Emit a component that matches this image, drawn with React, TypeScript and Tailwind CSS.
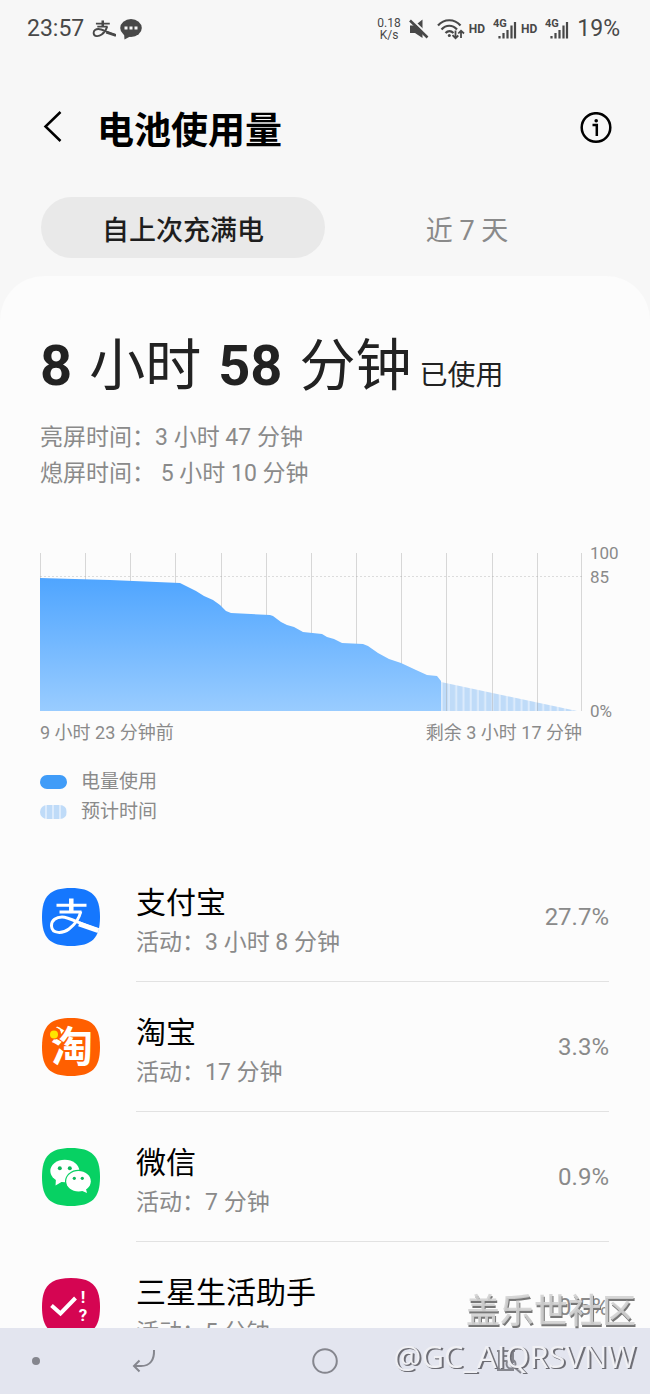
import React from 'react';

interface AppUsage {
  name: string;
  time: string;
  percent: string;
  icon: React.ReactNode;
}

const SQUIRCLE = 'M29 0C50 0 58 8 58 29S50 58 29 58 0 50 0 29 8 0 29 0Z';

// chart size: 542 x 158, one grid line per hour
const GRID_LINES = [0, 45, 90, 135, 181, 226, 271, 316, 361, 406, 452, 497, 541];
const USED_AREA =
  'M0 25L70 27L140 30L156 38L164 43L173 47L180 52L186 58L191 60L230 62L233 63L241 69L247 72L254 74L263 79L282 81L287 84L294 86L302 90L323 91L328 93L338 100L349 106L361 110L376 117L387 122L397 123L401 128V158H0Z';

const AlipayGlyph = ({ strokeWidth = 3 }: { strokeWidth?: number }) => (
  <g fill="none" stroke="currentColor" strokeWidth={strokeWidth}>
    <path d="M14.5 17.3H44.5M17.5 24H39.5" />
    <path d="M29.3 10.5V24" strokeWidth={strokeWidth + 1.5} />
    <path d="M38.8 23.5C37 31 33 36.500 27 41C21 45.500 10 46.500 9.500 38C9.200 32 14.500 29 20 29C28 29 38 36.500 58 42.300" />
    <path d="M37 35.800L58 43.200" strokeWidth={strokeWidth + 2} />
  </g>
);

const AlipayIcon = () => (
  <svg viewBox="0 0 58 58" className="size-[58px] text-white">
    <clipPath id="alipay-clip">
      <path d={SQUIRCLE} />
    </clipPath>
    <path d={SQUIRCLE} fill="#1577fe" />
    <g clipPath="url(#alipay-clip)">
      <AlipayGlyph />
    </g>
  </svg>
);

const TaobaoIcon = () => (
  <svg viewBox="0 0 58 58" className="size-[58px]">
    <path d={SQUIRCLE} fill="#ff5f00" />
    <text
      x="30"
      y="44"
      textAnchor="middle"
      fill="#fff"
      className="font-['Noto_Sans_CJK_SC',sans-serif] text-[42px] font-bold"
    >
      淘
    </text>
    <circle cx="13" cy="15.500" r="6" fill="#ff5f00" />
    <circle cx="12" cy="16.500" r="4" fill="#ffe600" />
  </svg>
);

const WechatIcon = () => (
  <svg viewBox="0 0 58 58" className="size-[58px]">
    <path d={SQUIRCLE} fill="#07d163" />
    <g fill="#fff">
      <path d="M14 30L13.500 37.500L22 32.500Z" />
      <ellipse cx="22.800" cy="23" rx="14.500" ry="11.300" />
      <ellipse cx="36.500" cy="33.300" rx="13.500" ry="11.500" fill="#07d163" />
      <ellipse cx="36.500" cy="33.300" rx="12.300" ry="10.300" />
      <path d="M38 42L45 45L43.500 39Z" />
    </g>
    <g fill="#0cb65a">
      <circle cx="17.800" cy="20.300" r="2" />
      <circle cx="27.800" cy="20.300" r="2" />
      <circle cx="32.300" cy="30.300" r="1.600" />
      <circle cx="40.300" cy="30.300" r="1.600" />
    </g>
  </svg>
);

const SamsungAssistantIcon = () => (
  <svg viewBox="0 0 58 58" className="size-[58px]">
    <path d={SQUIRCLE} fill="#d50552" />
    <path d="M9.500 27.500L18.500 35.500L33.500 20" fill="none" stroke="#fff" strokeWidth="4" />
    <g fill="#fff" textAnchor="middle" className="font-['Roboto',sans-serif] text-[17px] font-bold">
      <text x="41" y="25">!</text>
      <text x="41" y="43">?</text>
    </g>
  </svg>
);

const APPS: AppUsage[] = [
  { name: '支付宝', time: '3 小时 8 分钟', percent: '27.7%', icon: <AlipayIcon /> },
  { name: '淘宝', time: '17 分钟', percent: '3.3%', icon: <TaobaoIcon /> },
  { name: '微信', time: '7 分钟', percent: '0.9%', icon: <WechatIcon /> },
  { name: '三星生活助手', time: '5 分钟', percent: '0.5%', icon: <SamsungAssistantIcon /> },
];

const Signal = () => (
  <svg viewBox="0 0 24 22" className="h-[22px] w-6">
    <text x="0" y="9" fill="currentColor" className="font-['Roboto',sans-serif] text-[11px] font-bold">
      4G
    </text>
    <path
      d="M6.500 18V20.500M10.500 15V20.500M14.500 12V20.500M18.500 7.500V20.500M22 4V20.500"
      stroke="currentColor"
      strokeWidth="2.200"
    />
  </svg>
);

const StatusBar = () => (
  <div className="flex h-[58px] shrink-0 items-center justify-between pr-[30px] pl-[27px] text-[#484848]">
    <div className="flex items-center">
      <span className="text-[23px]">23:57</span>
      <svg viewBox="6 8 52 42" className="ml-2 h-5 w-6">
        <AlipayGlyph strokeWidth={4} />
      </svg>
      <svg viewBox="0 0 22 22" className="ml-1 size-[22px]">
        <ellipse cx="11" cy="10" rx="10.800" ry="9" fill="currentColor" />
        <path d="M4 15L4.500 21.500L11 18Z" fill="currentColor" />
        <path d="M4.500 8.500h3v3h-3zM9.500 8.500h3v3h-3zM14.500 8.500h3v3h-3z" fill="#f7f7f7" />
      </svg>
    </div>
    <div className="flex items-center">
      <div className="flex flex-col items-center text-xs leading-3">
        <span>0.18</span>
        <span>K/s</span>
      </div>
      <svg viewBox="0 0 20 20" className="ml-2 size-5">
        <path d="M1 6.500H6L13.500 .500V19L6 14H1Z" fill="currentColor" />
        <path d="M2.500 0L20 17" stroke="#f7f7f7" strokeWidth="2" />
        <path d="M1 1.500L18.500 18.500" stroke="currentColor" strokeWidth="2.600" />
      </svg>
      <svg viewBox="0 0 28 22" className="ml-2 h-[22px] w-7" fill="none" stroke="currentColor">
        <path
          d="M1 7.500C7 .500 17.500 .500 23.500 7.500M4.500 11.500C9 6.500 15.500 6.500 20 11.500M8.500 15C11 12.500 14 12.500 16.500 15"
          strokeWidth="2.200"
        />
        <circle cx="12.300" cy="17.500" r="1.500" fill="currentColor" stroke="none" />
        <path d="M18.500 12.500V20M15.500 17.200L18.500 20.200L21.300 17.500M24 20V13M21.300 15.500L24 12.700L27 15.500" strokeWidth="1.800" />
      </svg>
      <span className="ml-1 text-xs font-bold">HD</span>
      <span className="ml-2">
        <Signal />
      </span>
      <span className="ml-1 text-xs font-bold">HD</span>
      <span className="ml-2">
        <Signal />
      </span>
      <span className="ml-2 text-[23px]">19%</span>
    </div>
  </div>
);

const BatteryChart = () => (
  <div className="mt-[49px] flex gap-2">
    <div className="min-w-0 flex-1">
      <svg viewBox="0 0 542 158" preserveAspectRatio="none" className="my-3 h-[158px] w-full">
        <defs>
          <linearGradient id="used-fill" x1="0" y1="0" x2="0" y2="1">
            <stop offset="0" stopColor="#4fa5ff" />
            <stop offset="1" stopColor="#99ccff" />
          </linearGradient>
          <pattern id="left-fill" width="7.250" height="158" x="401" patternUnits="userSpaceOnUse">
            <rect width="7.250" height="158" fill="#dcebfc" />
            <rect x="1.700" width="5.300" height="158" fill="#bfdbf8" />
          </pattern>
        </defs>
        <path d="M0 23.500H542" stroke="#dcdcdc" strokeDasharray="2 2" />
        <path d="M401 129L537 158H401Z" fill="url(#left-fill)" />
        {GRID_LINES.map((x) => (
          <path key={x} d={`M${x + 0.5} 0V158`} stroke="#a0a0a0" strokeOpacity="0.4" />
        ))}
        <path d={USED_AREA} fill="url(#used-fill)" />
      </svg>
      <div className="flex justify-between text-[18px] leading-5">
        <span>9 小时 23 分钟前</span>
        <span>剩余 3 小时 17 分钟</span>
      </div>
    </div>
    <div className="flex h-[182px] w-[30px] flex-col text-[17px] leading-6 whitespace-nowrap">
      <span>100</span>
      <span>85</span>
      <span className="mt-auto">0%</span>
    </div>
  </div>
);

const Legend = () => (
  <ul className="mt-6 text-[19px] leading-[30px]">
    <li className="flex items-center gap-[14px]">
      <span className="h-[14px] w-[27px] rounded-full bg-[#409cf8]" />
      电量使用
    </li>
    <li className="flex items-center gap-[14px]">
      <span className="h-[14px] w-[27px] rounded-full bg-[repeating-linear-gradient(90deg,#bfdbf8_0px,#bfdbf8_5px,#dcebfc_5px,#dcebfc_7px)]" />
      预计时间
    </li>
  </ul>
);

const AppRow = ({ name, time, percent, icon }: AppUsage) => (
  <li className="flex h-[130px] items-center gap-9">
    {icon}
    <div className="flex h-full flex-1 items-center justify-between border-b border-[#e2e2e2]">
      <div className="pt-3">
        <p className="text-[30px] leading-10 text-black">{name}</p>
        <p className="text-[23px] leading-10">活动：{time}</p>
      </div>
      <span className="text-2xl">{percent}</span>
    </div>
  </li>
);

const NavigationBar = () => (
  <nav className="grid h-[66px] shrink-0 grid-cols-[72fr_144fr_218fr_150fr_66fr] place-items-center bg-[#e3e5ef] text-[#85868e]">
    <span className="size-2 rounded-full bg-current" />
    <button type="button" aria-label="返回">
      <svg viewBox="0 0 24 24" className="size-6" fill="none" stroke="currentColor" strokeWidth="2">
        <path d="M22 1C22.500 11 18 17 9 17H2M7.500 11.500L2 17L7.500 22.500" />
      </svg>
    </button>
    <button type="button" aria-label="主屏幕">
      <svg viewBox="0 0 26 26" className="size-[26px]" fill="none" stroke="currentColor" strokeWidth="2">
        <circle cx="13" cy="13" r="11.800" />
      </svg>
    </button>
    <button type="button" aria-label="最近">
      <svg viewBox="0 0 30 26" className="h-[26px] w-[30px]" fill="none" stroke="currentColor" strokeWidth="2">
        <path d="M3 3H21M3 22H20M5 3V22M19 3V15M9 8H16M9 13H14" />
        <circle cx="17" cy="16" r="4.500" />
        <path d="M20 19L27 25" />
      </svg>
    </button>
  </nav>
);

export default function App() {
  return (
    <div className="relative flex h-screen flex-col overflow-hidden bg-[#f7f7f7] font-['Roboto','Noto_Sans_CJK_SC',sans-serif] text-[#8a8a8a]">
      <StatusBar />
      <header className="flex h-[139px] shrink-0 items-center pr-[38px] pl-[41px] text-black">
        <button type="button" aria-label="返回">
          <svg viewBox="0 0 24 34" className="h-[34px] w-6" fill="none" stroke="currentColor" strokeWidth="2.500">
            <path d="M19.500 1L4.500 15.500L19.500 30" />
          </svg>
        </button>
        <h1 className="ml-8 flex-1 pt-2 text-[37px] font-bold">电池使用量</h1>
        <button type="button" aria-label="信息">
          <svg viewBox="0 0 32 32" className="size-8" fill="none" stroke="currentColor" strokeWidth="2.500">
            <circle cx="16" cy="15.500" r="14.300" />
            <path d="M12.500 13H16.800V24" />
            <circle cx="16.200" cy="8.800" r="1.800" fill="currentColor" stroke="none" />
          </svg>
        </button>
      </header>
      <div className="grid h-[61px] shrink-0 grid-cols-2 px-[41px] text-[27px]">
        <button type="button" className="rounded-full bg-[#e9e9e9] pt-2 font-medium text-[#1e1e1e]">
          自上次充满电
        </button>
        <button type="button" className="pt-2">
          近 7 天
        </button>
      </div>
      <main className="mt-[18px] min-h-0 flex-1 overflow-y-auto rounded-t-[44px] bg-[#fcfcfc] [scrollbar-width:none]">
        <section className="pr-[30px] pl-10">
          <h2 className="flex items-baseline gap-2 pt-[50px] text-[56px] leading-[80px] whitespace-nowrap text-[#222]">
            <span className="flex gap-[17px]">
              <b>8</b>
              <span>小时</span>
              <b>58</b>
              <span>分钟</span>
            </span>
            <span className="text-[28px]">已使用</span>
          </h2>
          <div className="mt-1 text-[23px] leading-9">
            <p>亮屏时间：3 小时 47 分钟</p>
            <p>熄屏时间： 5 小时 10 分钟</p>
          </div>
          <BatteryChart />
          <Legend />
        </section>
        <ul className="mt-[25px] pr-[41px] pl-[42px]">
          {APPS.map((app) => (
            <AppRow key={app.name} {...app} />
          ))}
        </ul>
      </main>
      <NavigationBar />
      <div className="pointer-events-none absolute right-[14px] bottom-[18px] text-right whitespace-nowrap">
        <p className="text-[34px] leading-[50px] font-medium text-[#d2d2d2]/90 [text-shadow:1px_2px_0_#777]">盖乐世社区</p>
        <p className="font-['Open_Sans',sans-serif] text-[31px] leading-10 text-[#f0f0f4] [text-shadow:1px_1px_0_#6b6b72,2px_1px_0_#77777f]">
          @GC_AIQRSVNW
        </p>
      </div>
    </div>
  );
}
